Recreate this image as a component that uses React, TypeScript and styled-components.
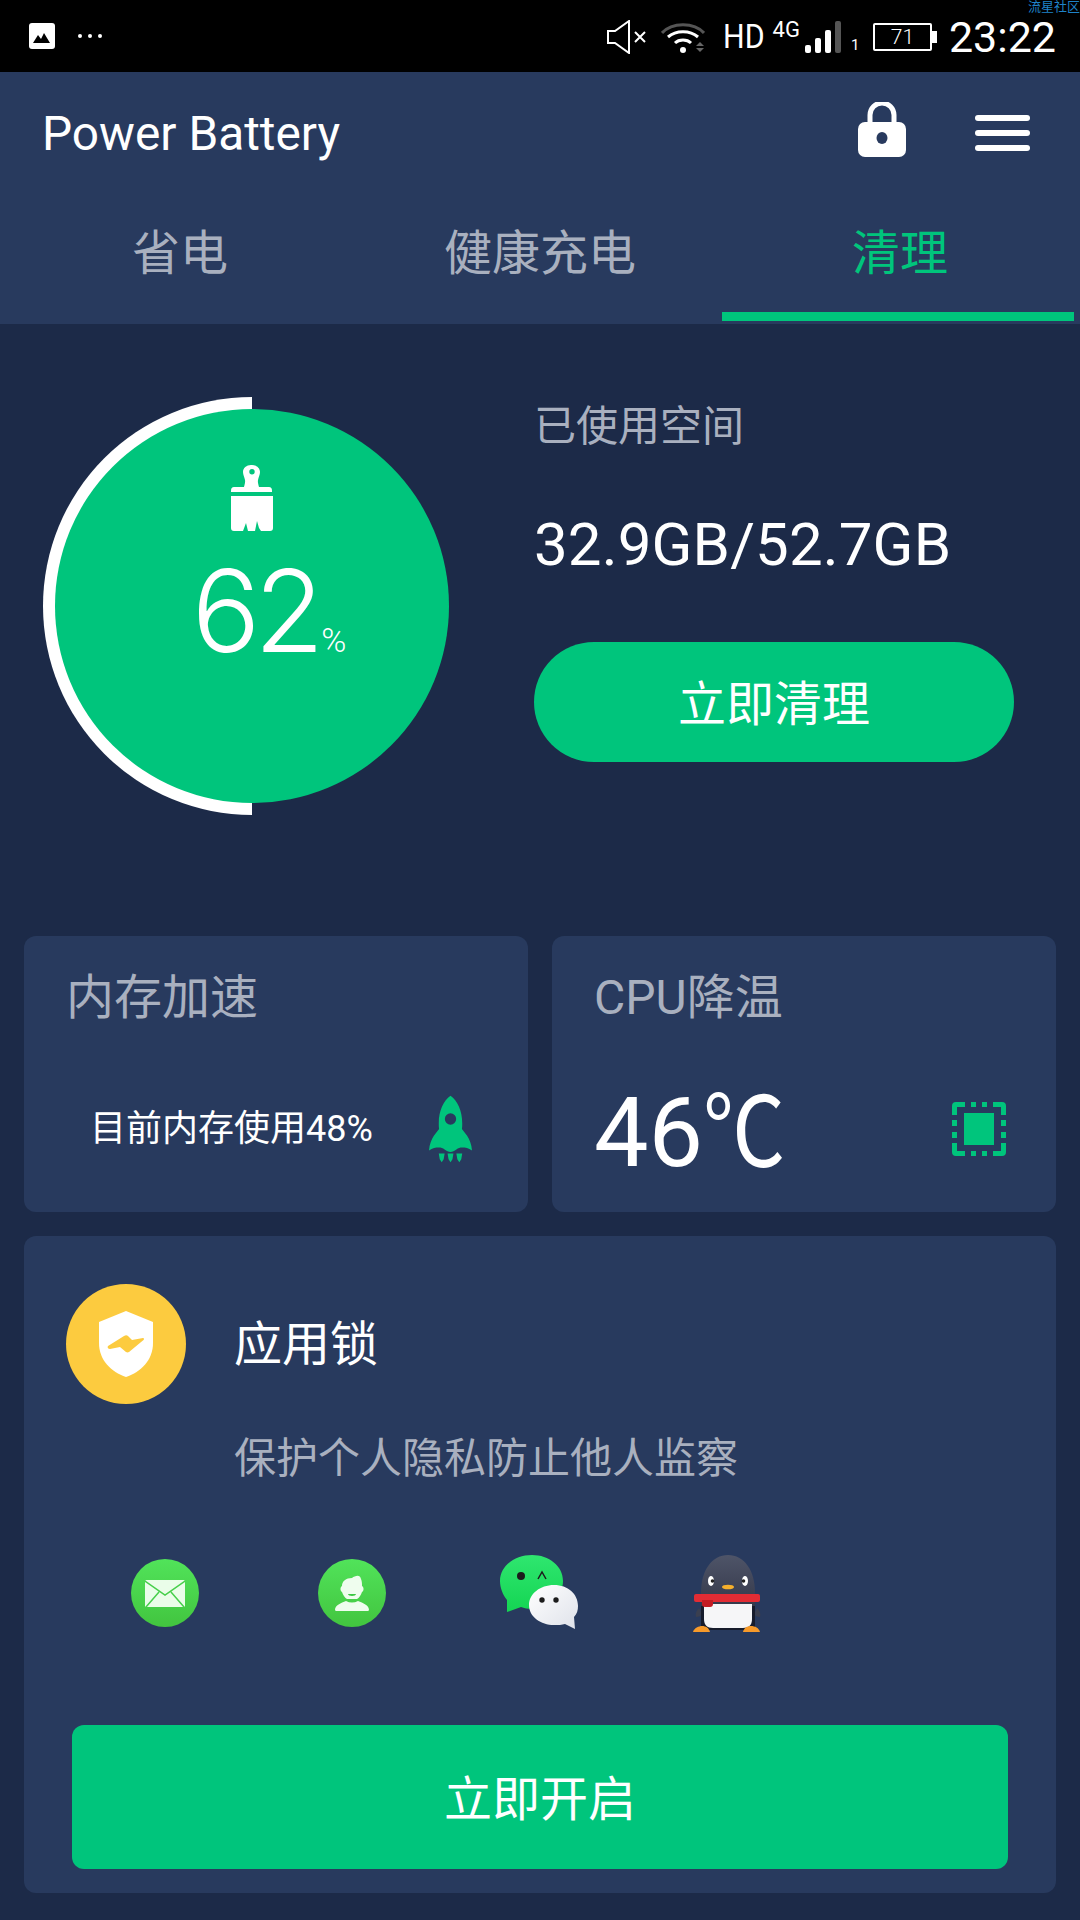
import React from "react";
import styled, { createGlobalStyle } from "styled-components";

const GREEN = "#00c57c";
const MUTED = "#a9b0bf";
const PANEL = "#283a5e";

const GlobalStyle = createGlobalStyle`
	html, body {
		margin: 0;
		padding: 0;
		background: #1c2a48;
	}
	* {
		box-sizing: border-box;
	}
	body {
		font-family: Roboto, "Noto Sans CJK SC", sans-serif;
	}
`;

const App = () => {
	return (
		<Page>
			<GlobalStyle />
			<StatusBar>
				<Watermark>流星社区</Watermark>
				<StatusLeft>
					<svg width="26" height="26" viewBox="0 0 26 26">
						<rect width="26" height="26" rx="3" fill="#fff" />
						<path d="M4 20l5-8 3 4 3-6 6 10z" fill="#000" />
					</svg>
					<Dots>
						<i />
						<i />
						<i />
					</Dots>
				</StatusLeft>
				<StatusRight>
					<svg width="40" height="34" viewBox="0 0 40 34" fill="none" stroke="#fff" strokeWidth="2">
						<path d="M1 11h7L22 1v32L8 23H1z" />
						<path d="M28 12l10 10M38 12L28 22" />
					</svg>
					<WifiIcon width="44" height="33" viewBox="0 0 44 33" fill="none" strokeWidth="3">
						<path d="M1 12C11 1 33 1 43 12" stroke="#555" />
						<path d="M7 16c8-7 22-7 30 0" stroke="#fff" />
						<path d="M14 22c4-4 12-4 16 0" stroke="#fff" />
						<circle cx="22" cy="29" r="3" fill="#fff" stroke="none" />
						<path d="M35 25l4-4 4 4zM35 27h8l-4 4z" fill="#666" stroke="none" />
					</WifiIcon>
					<HdText>HD</HdText>
					<NetText>4G</NetText>
					<svg width="36" height="32" viewBox="0 0 36 32">
						<rect x="0" y="24" width="6" height="8" rx="2" fill="#fff" />
						<rect x="10" y="17" width="6" height="15" rx="2" fill="#fff" />
						<rect x="20" y="9" width="6" height="23" rx="2" fill="#fff" />
						<rect x="30" y="0" width="6" height="32" rx="2" fill="#555" />
					</svg>
					<SimText>1</SimText>
					<Battery>71</Battery>
					<Clock>23:22</Clock>
				</StatusRight>
			</StatusBar>

			<Header>
				<TitleRow>
					<Title>Power Battery</Title>
					<TitleActions>
						<LockGlyph width="48" height="55" viewBox="0 0 48 55">
							<path
								d="M12 22v-9a12 12 0 0 1 24 0v9"
								fill="none"
								stroke="#fff"
								strokeWidth="5"
							/>
							<rect y="20" width="48" height="35" rx="7" fill="#fff" />
							<ellipse cx="24" cy="36" rx="5.500" ry="6" fill={PANEL} />
						</LockGlyph>
						<MenuIcon>
							<i />
							<i />
							<i />
						</MenuIcon>
					</TitleActions>
				</TitleRow>
				<Tabs>
					<Tab>省电</Tab>
					<Tab>健康充电</Tab>
					<Tab $active>清理</Tab>
				</Tabs>
			</Header>

			<Hero>
				<Gauge>
					<GaugeArc />
					<GaugeDisc>
						<svg width="42" height="66" viewBox="0 0 42 66" fill="#fff">
							<path
								fillRule="evenodd"
								d="M21 0c4.500 0 8 3 8 7 0 3-1.500 5-2 8-.4 2.500.3 4 1 7h10c2 0 3 1 3 4v1H0v-1c0-3 1-4 3-4h10c.7-3 1.400-4.500 1-7-.5-3-2-5-2-8 0-4 3.500-7 8-7zm0 4a2.700 2.700 0 1 0 0 5.400A2.700 2.700 0 0 0 21 4z"
							/>
							<path d="M0 31h42v32c0 2-1 3-3 3h-9l-2-3-2-7-2 10h-7l-2-8-3 8H3c-2 0-3-1-3-3z" />
						</svg>
						<Percent>
							62<small>%</small>
						</Percent>
					</GaugeDisc>
				</Gauge>
				<HeroInfo>
					<HeroLabel>已使用空间</HeroLabel>
					<HeroValue>32.9GB/52.7GB</HeroValue>
					<CleanButton>立即清理</CleanButton>
				</HeroInfo>
			</Hero>

			<Content>
				<CardRow>
					<Card>
						<CardTitle>内存加速</CardTitle>
						<CardBody>
							<MemoryText>目前内存使用48%</MemoryText>
							<RocketIcon viewBox="0 0 44 68" fill={GREEN}>
								<path
									fillRule="evenodd"
									d="M22 0c7 5 12 15 12 28 0 2 0 4-.3 6l5.300 7c2.500 3.500 4.500 9 5 15-3.500-2.500-7-3-10-3-2.500 0-4 .6-6 2-2 1.600-4 2.500-6 2.500s-4-.9-6-2.500c-2-1.400-3.500-2-6-2-3 0-6.500.5-10 3 .5-6 2.500-11.500 5-15l5.300-7c-.3-2-.3-4-.3-6C10 15 15 5 22 0zm0 18a5.800 5.800 0 1 0 0 11.600A5.800 5.800 0 0 0 22 18z"
								/>
								<path d="M10 59h6l-1 6-2 3-2-3zM19 59h6l-1 6-2 3-2-3zM28 59h6l-1 6-2 3-2-3z" />
							</RocketIcon>
						</CardBody>
					</Card>
					<Card>
						<CardTitle>CPU降温</CardTitle>
						<CardBody>
							<Temperature>
								46<Degree>℃</Degree>
							</Temperature>
							<ChipIcon viewBox="0 0 54 54" fill={GREEN}>
								<rect x="12" y="11" width="30" height="32" />
								<path d="M4 0h9v5H5v8H0V4a4 4 0 0 1 4-4zM50 0h-9v5h8v8h5V4a4 4 0 0 0-4-4zM4 54h9v-5H5v-8H0v9a4 4 0 0 0 4 4zM50 54h-9v-5h8v-8h5v9a4 4 0 0 1-4 4z" />
								<path d="M19 0h5v5h-5zM30 0h5v5h-5zM19 49h5v5h-5zM30 49h5v5h-5zM0 18h5v6H0zM0 30h5v6H0zM49 18h5v6h-5zM49 30h5v6h-5z" />
							</ChipIcon>
						</CardBody>
					</Card>
				</CardRow>

				<LockCard>
					<LockHead>
						<ShieldBadge>
							<svg width="54" height="66" viewBox="0 0 54 66">
								<path
									d="M27 0l27 11v21c0 17-12 29-27 34C12 61 0 49 0 32V11z"
									fill="#fff"
								/>
								<path
									d="M9 35l16-10c1.500-1 3-1 4 0l4 4 11-2c1 0 1.500 1 .5 2L30 41c-1 .6-2 .6-3 0l-6-5-10 2c-2 0-3-2-2-3z"
									fill="#fccb3f"
								/>
							</svg>
						</ShieldBadge>
						<LockTitle>应用锁</LockTitle>
					</LockHead>
					<LockHint>保护个人隐私防止他人监察</LockHint>
					<AppIcons>
						<AppSlot $gap={0}>
							<GreenBadge>
								<svg width="40" height="27" viewBox="0 0 40 27">
									<rect width="40" height="27" rx="1.500" fill="#eafde9" />
									<path
										d="M0 1l20 14L40 1M1 27l13-15M39 27L26 12"
										fill="none"
										stroke="#47cf4b"
										strokeWidth="1.500"
									/>
								</svg>
							</GreenBadge>
						</AppSlot>
						<AppSlot $gap={119}>
							<GreenBadge>
								<svg width="34" height="36" viewBox="0 0 34 36" fill="#effdee">
									<path d="M17 3c3-2 8-4 9 1 1 2 1 5 1 7 2 1 2 5 0 6-1 3-3 6-5 7H12c-2-1-4-4-5-7-2-1-2-5 0-6 0-5 4-8 10-8z" />
									<path d="M0 35c0-5 6-7 11-9 4 2 8 2 12 0 5 2 11 4 11 9 0 .6-1 1-2 1H2c-1 0-2-.4-2-1z" />
									<path d="M13 19h8c0 1-2 2-4 2s-4-1-4-2z" fill="#3bc742" />
								</svg>
							</GreenBadge>
						</AppSlot>
						<AppSlot $gap={114} $lift={3}>
							<svg width="78" height="74" viewBox="0 0 78 74">
								<defs>
									<linearGradient id="wxGreen" x1="0" y1="0" x2="0" y2="1">
										<stop offset="0" stopColor="#2fe66f" />
										<stop offset="1" stopColor="#14d553" />
									</linearGradient>
									<linearGradient id="wxWhite" x1="0" y1="0" x2="1" y2="1">
										<stop offset="0" stopColor="#fff" />
										<stop offset="1" stopColor="#dfe2ea" />
									</linearGradient>
								</defs>
								<path
									d="M32 0c17 0 31 11 31 26 0 15-14 28-31 28-4 0-8-1-11-2L7 57V45C3 40 0 33 0 26 0 11 15 0 32 0z"
									fill="url(#wxGreen)"
								/>
								<path
									d="M54 30c14 0 24 9 24 21 0 4-1 8-4 11l1 12-10-5c-3 1-7 1-11 1-13 0-25-8-25-20 0-11 11-20 25-20z"
									fill="url(#wxWhite)"
								/>
								<circle cx="21" cy="21" r="4" fill="#1c1c1c" />
								<path d="M38 24l4-7 4 7" fill="none" stroke="#1c1c1c" strokeWidth="1.500" />
								<circle cx="42" cy="45" r="2.700" fill="#1c1c1c" />
								<circle cx="56" cy="45" r="2.700" fill="#1c1c1c" />
							</svg>
						</AppSlot>
						<AppSlot $gap={115}>
							<svg width="70" height="78" viewBox="0 0 70 78">
								<defs>
									<linearGradient id="qqHead" x1="0" y1="0" x2="0" y2="1">
										<stop offset="0" stopColor="#4e5468" />
										<stop offset="1" stopColor="#2a2e3e" />
									</linearGradient>
								</defs>
								<path d="M6 54c-3 3-4 6-3 9 3 0 5-1 6-3z" fill="#3a3f50" />
								<path d="M64 54c3 3 4 6 3 9-3 0-5-1-6-3z" fill="#3a3f50" />
								<path
									d="M35 1c16 0 27 15 27 38v35H8V39C8 16 19 1 35 1z"
									fill="url(#qqHead)"
								/>
								<rect x="8" y="52" width="54" height="24" fill="#171c2c" />
								<path
									d="M11 50h48v15c0 6-3 9-9 9H20c-6 0-9-3-9-9z"
									fill="#f6f6f8"
								/>
								<rect x="1" y="40" width="66" height="8" rx="2" fill="#e22c34" />
								<path d="M9 46h11v4c0 2-1 3-3 3h-5c-2 0-3-1-3-3z" fill="#c41c24" />
								<ellipse cx="18" cy="27" rx="3" ry="5" fill="#fff" />
								<ellipse cx="52" cy="27" rx="3" ry="5" fill="#fff" />
								<circle cx="19.500" cy="27" r="1.800" fill="#222" />
								<circle cx="50.500" cy="27" r="1.800" fill="#222" />
								<ellipse cx="35" cy="33" rx="6" ry="2.300" fill="#f6b02c" />
								<path d="M0 78c1-4 6-6 9-6 4 0 7 2 8 6zM50 78c1-4 4-6 8-6s8 2 9 6z" fill="#f79a2a" />
							</svg>
						</AppSlot>
					</AppIcons>
					<EnableButton>立即开启</EnableButton>
				</LockCard>
			</Content>
		</Page>
	);
};

export default App;

const Page = styled.div`
	width: 1080px;
	height: 1920px;
	display: flex;
	flex-direction: column;
	overflow: hidden;
	background-color: #1c2a48;
	color: #fff;
`;

const StatusBar = styled.div`
	position: relative;
	height: 72px;
	padding: 0 24px 0 29px;
	flex-shrink: 0;
	display: flex;
	align-items: center;
	justify-content: space-between;
	background-color: #000;
`;

const Watermark = styled.span`
	position: absolute;
	top: 0;
	right: 0;
	font-size: 13px;
	line-height: 13px;
	color: #1f83c9;
`;

const StatusLeft = styled.div`
	display: flex;
	align-items: center;
	gap: 23px;
`;

const Dots = styled.div`
	display: flex;
	gap: 6px;

	i {
		width: 4px;
		height: 4px;
		border-radius: 50%;
		background-color: #fff;
	}
`;

const StatusRight = styled.div`
	display: flex;
	align-items: center;
	gap: 10px;
	margin-top: 2px;
`;

const WifiIcon = styled.svg`
	margin-left: 4px;
`;

const HdText = styled.span`
	font-size: 33px;
	line-height: 34px;
	transform: scaleX(0.92);
	transform-origin: left;
	width: 42px;
	margin: 0 0 0 8px;
`;

const NetText = styled.span`
	font-size: 22px;
	line-height: 22px;
	margin: -14px -5px 0 -2px;
`;

const SimText = styled.span`
	font-size: 15px;
	line-height: 15px;
	margin: 16px -3px 0 0;
	width: 8px;
`;

const Battery = styled.div`
	position: relative;
	width: 59px;
	height: 28px;
	margin: 0 5px 0 7px;
	border: 2px solid #fff;
	border-radius: 2px;
	font-size: 21px;
	line-height: 24px;
	font-weight: 300;
	text-align: center;

	&::after {
		content: "";
		position: absolute;
		top: 6px;
		right: -7px;
		width: 5px;
		height: 12px;
		background-color: #fff;
	}
`;

const Clock = styled.span`
	font-size: 43px;
	line-height: 44px;
	margin-left: 2px;
`;

const Header = styled.div`
	height: 252px;
	flex-shrink: 0;
	display: flex;
	flex-direction: column;
	background-color: ${PANEL};
`;

const TitleRow = styled.div`
	height: 122px;
	padding: 0 50px 0 42px;
	display: flex;
	align-items: center;
	justify-content: space-between;
`;

const Title = styled.div`
	font-size: 47.8px;
	line-height: 56px;
	padding-top: 1px;
`;

const TitleActions = styled.div`
	display: flex;
	align-items: center;
	gap: 69px;
`;

const LockGlyph = styled.svg`
	margin-top: -7px;
`;

const MenuIcon = styled.div`
	width: 55px;
	display: flex;
	flex-direction: column;
	gap: 9px;

	i {
		height: 6px;
		border-radius: 3px;
		background-color: #fff;
	}
`;

const Tabs = styled.div`
	flex: 1;
	display: flex;
`;

const Tab = styled.div<{ $active?: boolean }>`
	position: relative;
	width: 360px;
	padding-top: 24px;
	text-align: center;
	font-size: 48px;
	line-height: 72px;
	color: ${(p) => (p.$active ? GREEN : MUTED)};

	${(p) =>
		p.$active &&
		`
		&::after {
			content: "";
			position: absolute;
			left: 2px;
			right: 6px;
			bottom: 3px;
			height: 9px;
			background-color: ${GREEN};
		}
	`}
`;

const Hero = styled.div`
	height: 612px;
	flex-shrink: 0;
	padding: 73px 0 0 43px;
	display: flex;
	align-items: flex-start;
	gap: 73px;
`;

const Gauge = styled.div`
	position: relative;
	width: 418px;
	height: 418px;
	flex-shrink: 0;
	display: flex;
	align-items: center;
	justify-content: flex-end;
`;

const GaugeArc = styled.div`
	position: absolute;
	left: 0;
	top: 0;
	width: 209px;
	height: 418px;
	border-radius: 209px 0 0 209px;
	background-color: #fff;
`;

const GaugeDisc = styled.div`
	position: relative;
	width: 394px;
	height: 394px;
	margin-right: 12px;
	padding-top: 56px;
	border-radius: 50%;
	display: flex;
	flex-direction: column;
	align-items: center;
	background-color: ${GREEN};
`;

const Percent = styled.div`
	margin-top: 20px;
	padding-left: 34px;
	font-family: Inter, Roboto, sans-serif;
	font-size: 114px;
	font-weight: 300;
	letter-spacing: -6px;
	line-height: 120px;
	white-space: nowrap;

	small {
		margin-left: 3px;
		font-family: Roboto, sans-serif;
		font-size: 34px;
		letter-spacing: 0;
	}
`;

const HeroInfo = styled.div`
	display: flex;
	flex-direction: column;
	align-items: flex-start;
`;

const HeroLabel = styled.div`
	font-size: 42px;
	line-height: 56px;
	color: ${MUTED};
	margin-top: 2px;
`;

const HeroValue = styled.div`
	font-size: 60px;
	line-height: 70px;
	margin-top: 55px;
	letter-spacing: 0.15px;
`;

const CleanButton = styled.div`
	width: 480px;
	height: 120px;
	margin-top: 62px;
	padding-bottom: 4px;
	border-radius: 60px;
	display: flex;
	align-items: center;
	justify-content: center;
	font-size: 48px;
	background-color: ${GREEN};
`;

const Content = styled.div`
	padding: 0 24px;
	display: flex;
	flex-direction: column;
	gap: 24px;
`;

const CardRow = styled.div`
	display: flex;
	gap: 24px;
`;

const Card = styled.div`
	flex: 1;
	height: 276px;
	padding: 28px 42px 0;
	border-radius: 12px;
	background-color: ${PANEL};
	display: flex;
	flex-direction: column;
`;

const CardTitle = styled.div`
	font-size: 48px;
	line-height: 66px;
	color: ${MUTED};
	margin-top: 1px;
`;

const CardBody = styled.div`
	flex: 1;
	display: flex;
	align-items: center;
	justify-content: space-between;
	padding-top: 14px;
`;

const MemoryText = styled.div`
	font-size: 36px;
	line-height: 44px;
	padding-left: 24px;
`;

const RocketIcon = styled.svg`
	width: 43px;
	height: 68px;
	margin-right: 14px;
`;

const Temperature = styled.div`
	font-size: 97px;
	line-height: 110px;
	margin-top: 8px;
`;

const Degree = styled.span`
	display: inline-block;
	transform: scaleX(0.85);
	transform-origin: left;
`;

const ChipIcon = styled.svg`
	width: 54px;
	height: 54px;
	margin: 0 8px 0 0;
`;

const LockCard = styled.div`
	height: 657px;
	padding: 48px 48px 24px;
	border-radius: 12px;
	display: flex;
	flex-direction: column;
	background-color: ${PANEL};
`;

const LockHead = styled.div`
	display: flex;
	align-items: center;
	gap: 48px;
	margin-left: -6px;
`;

const ShieldBadge = styled.div`
	width: 120px;
	height: 120px;
	border-radius: 50%;
	display: flex;
	align-items: center;
	justify-content: center;
	background-color: #fccb3f;
`;

const LockTitle = styled.div`
	font-size: 48px;
	line-height: 60px;
	margin-top: 2px;
`;

const LockHint = styled.div`
	margin: 25px 0 0 162px;
	font-size: 42px;
	line-height: 60px;
	color: ${MUTED};
`;

const AppIcons = styled.div`
	height: 84px;
	margin: 62px 0 0 59px;
	display: flex;
	align-items: center;
`;

const AppSlot = styled.div<{ $gap: number; $lift?: number }>`
	margin-left: ${(p) => p.$gap}px;
	margin-bottom: ${(p) => p.$lift ?? 0}px;
	display: flex;
	justify-content: center;
`;

const GreenBadge = styled.div`
	width: 68px;
	height: 68px;
	border-radius: 50%;
	display: flex;
	align-items: center;
	justify-content: center;
	background: linear-gradient(180deg, #51e35a, #42c53f);
`;

const EnableButton = styled.div`
	height: 144px;
	margin-top: auto;
	padding-bottom: 4px;
	border-radius: 12px;
	display: flex;
	align-items: center;
	justify-content: center;
	font-size: 48px;
	background-color: ${GREEN};
`;
